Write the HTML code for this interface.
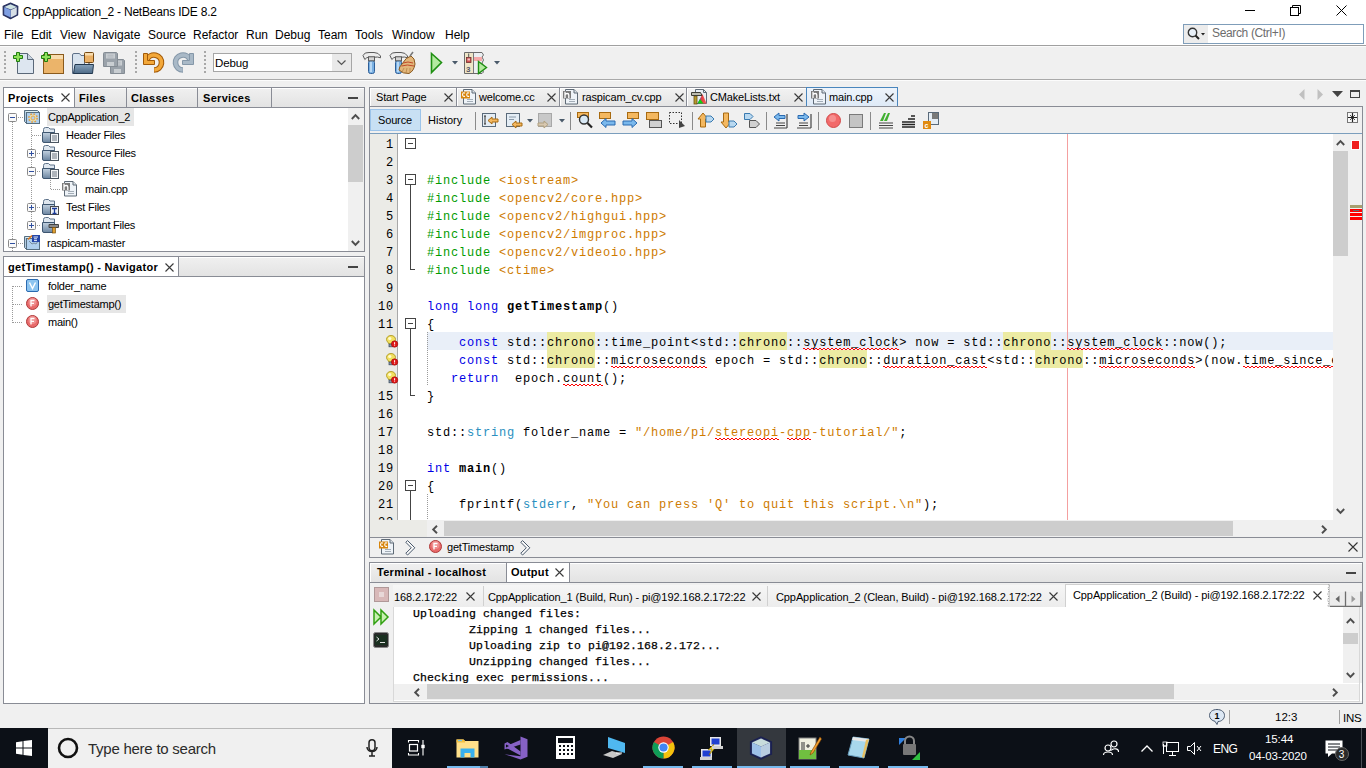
<!DOCTYPE html>
<html><head><meta charset="utf-8"><style>
*{box-sizing:border-box}
body{margin:0;width:1366px;height:768px;overflow:hidden;background:#f0f0f0;font-family:"Liberation Sans",sans-serif;font-size:11px;color:#000;position:relative}
.a{position:absolute}
.ui{font-size:11px;letter-spacing:-0.25px;white-space:nowrap;line-height:13px}
.b{font-weight:bold;letter-spacing:0.3px}
.code{font-family:"Liberation Mono",monospace;font-size:12px;letter-spacing:0.8px;white-space:pre;line-height:18px}
.out{font-family:"Liberation Mono",monospace;font-size:11.5px;letter-spacing:0.1px;white-space:pre;line-height:16px;color:#000;-webkit-text-stroke:0.25px #000}
.kw{color:#0000e6}.pp{color:#009b00}.st{color:#ce7b00}.ty{color:#2a8fc0}
.hl{background:#ecebA3;padding-top:4px}
.sq{}
.zz{position:absolute;height:2px;background-image:linear-gradient(90deg,#f00 50%,transparent 50%),linear-gradient(90deg,transparent 50%,#f00 50%);background-size:4px 1px,4px 1px;background-position:0 0,0 1px;background-repeat:repeat-x}
svg.a{overflow:visible}
</style></head><body>
<div class="a" style="left:0px;top:0px;width:1366px;height:45px;background:#fff"></div>
<div class="a" style="left:0px;top:45px;width:1366px;height:1px;background:#a0a0a0"></div>
<div class="a" style="left:0px;top:46px;width:1366px;height:1px;background:#fbfbfb"></div>
<svg class="a" style="left:0px;top:0px;" width="22" height="22" viewBox="0 0 22 22"><path d="M10.5 3 L17.8 6.3 L17.6 15 L10.5 18.6 L3.3 15 L3.2 6.3Z" fill="#2a3468" stroke="#27305e" stroke-width="1.2" stroke-linejoin="round"/><path d="M10.5 4.3 L16.8 7 L10.8 9.6 L4.2 7Z" fill="#cfe3e3"/><path d="M4.2 7.3 L10.7 10 L10.7 17.6 L4.2 14.4Z" fill="#7f9fe2"/><path d="M10.9 10 L16.8 7.3 L16.7 14.4 L10.9 17.6Z" fill="#d7dfe6"/></svg>
<div class="a ui" style="left:23px;top:5px;font-size:12px;letter-spacing:-0.2px;line-height:15px">CppApplication_2 - NetBeans IDE 8.2</div>
<div class="a ui" style="left:4px;top:28px;font-size:12px;letter-spacing:0;line-height:15px">File</div>
<div class="a ui" style="left:31px;top:28px;font-size:12px;letter-spacing:0;line-height:15px">Edit</div>
<div class="a ui" style="left:60px;top:28px;font-size:12px;letter-spacing:0;line-height:15px">View</div>
<div class="a ui" style="left:93px;top:28px;font-size:12px;letter-spacing:0;line-height:15px">Navigate</div>
<div class="a ui" style="left:148px;top:28px;font-size:12px;letter-spacing:0;line-height:15px">Source</div>
<div class="a ui" style="left:193px;top:28px;font-size:12px;letter-spacing:0;line-height:15px">Refactor</div>
<div class="a ui" style="left:246px;top:28px;font-size:12px;letter-spacing:0;line-height:15px">Run</div>
<div class="a ui" style="left:275px;top:28px;font-size:12px;letter-spacing:0;line-height:15px">Debug</div>
<div class="a ui" style="left:318px;top:28px;font-size:12px;letter-spacing:0;line-height:15px">Team</div>
<div class="a ui" style="left:355px;top:28px;font-size:12px;letter-spacing:0;line-height:15px">Tools</div>
<div class="a ui" style="left:392px;top:28px;font-size:12px;letter-spacing:0;line-height:15px">Window</div>
<div class="a ui" style="left:445px;top:28px;font-size:12px;letter-spacing:0;line-height:15px">Help</div>
<div class="a" style="left:1245px;top:10px;width:10px;height:1px;background:#000"></div>
<svg class="a" style="left:1290px;top:5px;" width="11" height="11" viewBox="0 0 11 11"><rect x="0.5" y="2.5" width="8" height="8" fill="none" stroke="#000"/><path d="M2.5 2.5 V0.5 H10.5 V8.5 H8.5" fill="none" stroke="#000"/></svg>
<svg class="a" style="left:1336px;top:5px;" width="11" height="11" viewBox="0 0 11 11"><path d="M0.5 0.5 L10.5 10.5 M10.5 0.5 L0.5 10.5" stroke="#000" stroke-width="1"/></svg>
<div class="a" style="left:1183px;top:24px;width:181px;height:20px;background:#fff;border:1px solid #7f9db9"></div>
<div class="a" style="left:1184px;top:25px;width:24px;height:18px;background:#ececec"></div>
<svg class="a" style="left:1187px;top:27px;" width="18" height="14" viewBox="0 0 18 14"><circle cx="5.5" cy="5.5" r="4.2" fill="#e8f0f8" stroke="#333" stroke-width="1.4"/><path d="M8.5 8.5 L12 12" stroke="#222" stroke-width="2"/><path d="M14 6 L18 6 L16 8.5Z" fill="#222"/></svg>
<div class="a ui" style="left:1212px;top:26px;font-size:12px;letter-spacing:-0.35px;color:#6d6d6d;line-height:15px">Search (Ctrl+I)</div>
<div class="a" style="left:0px;top:79px;width:1366px;height:1px;background:#a9a9a9"></div>
<div class="a" style="left:0px;top:80px;width:1366px;height:1px;background:#fcfcfc"></div>
<svg class="a" style="left:4px;top:51px;" width="2" height="22" viewBox="0 0 2 22"><rect x="0" y="0" width="2" height="2" fill="#a8a8a8"/><rect x="0" y="4" width="2" height="2" fill="#a8a8a8"/><rect x="0" y="8" width="2" height="2" fill="#a8a8a8"/><rect x="0" y="12" width="2" height="2" fill="#a8a8a8"/><rect x="0" y="16" width="2" height="2" fill="#a8a8a8"/><rect x="0" y="20" width="2" height="2" fill="#a8a8a8"/></svg>
<svg class="a" style="left:135px;top:51px;" width="2" height="22" viewBox="0 0 2 22"><rect x="0" y="0" width="2" height="2" fill="#a8a8a8"/><rect x="0" y="4" width="2" height="2" fill="#a8a8a8"/><rect x="0" y="8" width="2" height="2" fill="#a8a8a8"/><rect x="0" y="12" width="2" height="2" fill="#a8a8a8"/><rect x="0" y="16" width="2" height="2" fill="#a8a8a8"/><rect x="0" y="20" width="2" height="2" fill="#a8a8a8"/></svg>
<svg class="a" style="left:204px;top:51px;" width="2" height="22" viewBox="0 0 2 22"><rect x="0" y="0" width="2" height="2" fill="#a8a8a8"/><rect x="0" y="4" width="2" height="2" fill="#a8a8a8"/><rect x="0" y="8" width="2" height="2" fill="#a8a8a8"/><rect x="0" y="12" width="2" height="2" fill="#a8a8a8"/><rect x="0" y="16" width="2" height="2" fill="#a8a8a8"/><rect x="0" y="20" width="2" height="2" fill="#a8a8a8"/></svg>
<svg class="a" style="left:13px;top:52px;" width="22" height="22" viewBox="0 0 22 22"><path d="M4.5 1.5 H14.5 L20.5 7.5 V21.5 H4.5Z" fill="#dde6f0" stroke="#5a6878"/><path d="M14.5 1.5 V7.5 H20.5" fill="#c7d3e0" stroke="#5a6878"/><path d="M3.5 0.5 h3 v3 h3 v3 h-3 v3 h-3 v-3 h-3 v-3 h3z" fill="#8fe05a" stroke="#1f7d0f"/></svg>
<svg class="a" style="left:41px;top:52px;" width="23" height="22" viewBox="0 0 23 22"><rect x="2.5" y="2.5" width="20" height="19" fill="#ebb46a" stroke="#8a5a1c"/><rect x="3" y="3" width="19" height="4" fill="#f8dcae"/><path d="M3.5 0.5 h3 v3 h3 v3 h-3 v3 h-3 v-3 h-3 v-3 h3z" fill="#8fe05a" stroke="#1f7d0f"/></svg>
<svg class="a" style="left:72px;top:52px;" width="23" height="22" viewBox="0 0 23 22"><defs><linearGradient id="opf" x1="0" y1="0" x2="0" y2="1"><stop offset="0" stop-color="#86a2bc"/><stop offset="1" stop-color="#4d6a86"/></linearGradient></defs><path d="M0.5 3 Q0.5 1.5 2 1.5 H7.5 L9 3.5 H12.5 V21.5 H0.5Z" fill="#d8e3ee" stroke="#5e7088"/><rect x="12.5" y="0.5" width="9" height="10" rx="1" fill="#eab066" stroke="#774a12"/><rect x="13" y="1" width="8" height="2.5" fill="#f8dcae"/><path d="M17 10.5 V12" stroke="#333"/><path d="M3 12.5 H21.5 L20.5 21.5 H1.5 Z" fill="url(#opf)" stroke="#22384f" stroke-linejoin="round"/></svg>
<svg class="a" style="left:103px;top:52px;" width="23" height="22" viewBox="0 0 23 22"><path d="M7.5 8.5 Q7.5 7.5 8.5 7.5 H20.5 L21.5 8.5 V21.5 H7.5Z" fill="#9aa2aa" stroke="#848c94"/><rect x="10" y="8.5" width="9" height="5" fill="#c9ced2"/><path d="M11.5 10.2 H17.5 M11.5 12 H17.5" stroke="#aab0b6" stroke-width="0.8"/><rect x="11" y="17" width="7" height="4" fill="#c9ced2"/><path d="M0.5 1.5 Q0.5 0.5 1.5 0.5 H13.5 L14.5 1.5 V14.5 H0.5Z" fill="#9aa2aa" stroke="#848c94"/><rect x="3" y="1.5" width="9" height="5" fill="#c9ced2"/><path d="M4.5 3.2 H10.5 M4.5 5 H10.5" stroke="#aab0b6" stroke-width="0.8"/><rect x="4" y="10" width="7" height="4" fill="#c9ced2"/></svg>
<svg class="a" style="left:143px;top:53px;" width="22" height="21" viewBox="0 0 22 21"><path d="M3.95 6.93 A7.5 7.5 0 1 1 11 17" fill="none" stroke="#a25a08" stroke-width="5.6"/><path d="M3.95 6.93 A7.5 7.5 0 1 1 11.3 17" fill="none" stroke="#f3a83a" stroke-width="3.6"/><path d="M0.5 0.5 H4.5 V7.5 H11.5 V11.5 H0.5 Z" fill="#f3a83a" stroke="#a25a08" stroke-width="1"/><rect x="1" y="1" width="3" height="10" fill="#f3a83a"/><rect x="1" y="8" width="10" height="3" fill="#f3a83a"/></svg>
<svg class="a" style="left:173px;top:53px;" width="22" height="21" viewBox="0 0 22 21"><g transform="translate(21,0) scale(-1,1)"><path d="M3.95 6.93 A7.5 7.5 0 1 1 11 17" fill="none" stroke="#8497a8" stroke-width="5.6"/><path d="M3.95 6.93 A7.5 7.5 0 1 1 11.3 17" fill="none" stroke="#a9b9c7" stroke-width="3.6"/><path d="M0.5 0.5 H4.5 V7.5 H11.5 V11.5 H0.5 Z" fill="#a9b9c7" stroke="#8497a8" stroke-width="1"/><rect x="1" y="1" width="3" height="10" fill="#a9b9c7"/><rect x="1" y="8" width="10" height="3" fill="#a9b9c7"/></g></svg>
<div class="a" style="left:213px;top:53px;width:139px;height:19px;background:#e9e9e9;border:1px solid #a6a6a6"></div>
<div class="a" style="left:214px;top:54px;width:118px;height:17px;background:#fff"></div>
<div class="a ui" style="left:215px;top:57px;font-size:11.5px;letter-spacing:-0.1px;line-height:13px">Debug</div>
<svg class="a" style="left:337px;top:60px;" width="9" height="6" viewBox="0 0 9 6"><path d="M0.5 0.5 L4.5 4.5 L8.5 0.5" fill="none" stroke="#555" stroke-width="1.2"/></svg>
<svg class="a" style="left:362px;top:51px;" width="20" height="23" viewBox="0 0 20 23"><path d="M1 4.5 Q2.5 1 7 1.5 H12 Q16.5 1.5 18.5 5 V6.8 Q15.5 5.6 12.5 6.2 H7 Q4.5 6.2 2.8 8.5 Z" fill="#ececec" stroke="#5a5a5a"/><rect x="6.5" y="9.5" width="6" height="13" rx="2" fill="#7ab0e2" stroke="#2e5f98"/><rect x="8" y="11" width="2" height="10" fill="#b8d8f4"/><rect x="6.5" y="5.8" width="6" height="4" fill="#d4d4d4" stroke="#5a5a5a"/></svg>
<svg class="a" style="left:389px;top:51px;" width="27" height="23" viewBox="0 0 27 23"><path d="M1 4.5 Q2.5 1 7 1.5 H12 Q16.5 1.5 18.5 5 V6.8 Q15.5 5.6 12.5 6.2 H7 Q4.5 6.2 2.8 8.5 Z" fill="#ececec" stroke="#5a5a5a"/><rect x="6.5" y="9.5" width="6" height="13" rx="2" fill="#7ab0e2" stroke="#2e5f98"/><rect x="8" y="11" width="2" height="10" fill="#b8d8f4"/><rect x="6.5" y="5.8" width="6" height="4" fill="#d4d4d4" stroke="#5a5a5a"/><path d="M13 13 Q17 6 22 5 Q26 7 26 13 Q25 20 20 22.5 Q14 23 10 19 Q10 16 13 13Z" fill="#e2b67a" stroke="#8a5a20"/><path d="M14 12 Q19 10 24 12 M12.5 15 Q18 13 25 15" fill="none" stroke="#c04a2a" stroke-width="1"/><path d="M15 17 L13 21 M18 17 L17 22 M21 17 L21 22" stroke="#b08040" stroke-width="0.7"/><path d="M21 5 L24 1" stroke="#777" stroke-width="1.5"/></svg>
<svg class="a" style="left:430px;top:52px;" width="13" height="22" viewBox="0 0 13 22"><path d="M1.5 1.5 L11.5 10.5 L1.5 20.5 Z" fill="#b4eaa0" stroke="#1f8f12" stroke-width="1.6"/></svg>
<svg class="a" style="left:452px;top:61px;" width="6" height="4" viewBox="0 0 6 4"><path d="M0 0 H6 L3 3.5Z" fill="#4a5a6a"/></svg>
<svg class="a" style="left:464px;top:52px;" width="24" height="23" viewBox="0 0 24 23"><path d="M0.5 0.5 H18 L19.5 3 L18 5 L19.5 8 L18 11 L19.5 14 L18 17 L19.5 20 L18 21.5 H0.5Z" fill="#eceff2" stroke="#6b6b6b"/><rect x="1" y="1" width="8" height="20" fill="#efe6c8"/><path d="M9.5 1 V21" stroke="#7a7a7a"/><rect x="2.5" y="5.5" width="4.5" height="5" fill="#d05050" stroke="#703030" stroke-width="0.8"/><rect x="3.5" y="6.5" width="2.5" height="2" fill="#f4c0c0"/><path d="M4.7 1.5 V5" stroke="#555"/><text x="2" y="19.5" font-size="8" font-weight="bold" font-family="Liberation Sans" fill="#556">3</text><rect x="10" y="5" width="8" height="4" fill="#f6a8a8"/><path d="M14.5 9.5 L22.5 15.5 L14.5 21.5Z" fill="#b4eaa0" stroke="#1f8f12" stroke-width="1.4"/></svg>
<svg class="a" style="left:494px;top:61px;" width="6" height="4" viewBox="0 0 6 4"><path d="M0 0 H6 L3 3.5Z" fill="#4a5a6a"/></svg>
<div class="a" style="left:3px;top:87px;width:362px;height:165px;background:#fff;border:1px solid #898c95"></div>
<div class="a" style="left:4px;top:88px;width:360px;height:19px;background:linear-gradient(#f0f0f0,#e3e3e3);box-shadow:inset 1px 1px 0 #fff"></div>
<div class="a" style="left:4px;top:88px;width:70px;height:19px;background:#fff"></div>
<div class="a" style="left:4px;top:107px;width:360px;height:1px;background:#898c95"></div>
<div class="a" style="left:74px;top:88px;width:1px;height:19px;background:#898c95"></div>
<div class="a" style="left:126px;top:88px;width:1px;height:19px;background:#898c95"></div>
<div class="a" style="left:197px;top:88px;width:1px;height:19px;background:#898c95"></div>
<div class="a" style="left:271px;top:88px;width:1px;height:19px;background:#898c95"></div>
<div class="a ui b" style="left:8px;top:92px;">Projects</div>
<svg class="a" style="left:61px;top:93px;" width="9" height="9" viewBox="0 0 9 9"><path d="M0.5 0.5 L8.5 8.5 M8.5 0.5 L0.5 8.5" stroke="#3a3a3a" stroke-width="1.1"/></svg>
<div class="a ui b" style="left:79px;top:92px;">Files</div>
<div class="a ui b" style="left:131px;top:92px;">Classes</div>
<div class="a ui b" style="left:203px;top:92px;">Services</div>
<div class="a" style="left:348px;top:97px;width:10px;height:2px;background:#444"></div>
<div class="a" style="left:348px;top:108px;width:16px;height:143px;background:#f0f0f0"></div>
<div class="a" style="left:348px;top:125px;width:15px;height:57px;background:#cdcdcd"></div>
<svg class="a" style="left:351px;top:114px;" width="9" height="6" viewBox="0 0 9 6"><path d="M0.8 5 L4.5 1.2 L8.2 5" fill="none" stroke="#4e4e4e" stroke-width="1.9"/></svg>
<svg class="a" style="left:351px;top:240px;" width="9" height="6" viewBox="0 0 9 6"><path d="M0.8 1 L4.5 4.8 L8.2 1" fill="none" stroke="#4e4e4e" stroke-width="1.9"/></svg>
<div class="a" style="left:47px;top:108px;width:87px;height:18px;background:#e6e6e6"></div>
<div class="a" style="left:12px;top:122px;width:1px;height:129px;background:repeating-linear-gradient(#9a9a9a 0 1px,transparent 1px 2px)"></div>
<div class="a" style="left:31px;top:126px;width:1px;height:100px;background:repeating-linear-gradient(#9a9a9a 0 1px,transparent 1px 2px)"></div>
<div class="a" style="left:50px;top:176px;width:1px;height:13px;background:repeating-linear-gradient(#9a9a9a 0 1px,transparent 1px 2px)"></div>
<div class="a ui" style="left:48px;top:111px;">CppApplication_2</div>
<div class="a ui" style="left:66px;top:129px;">Header Files</div>
<div class="a ui" style="left:66px;top:147px;">Resource Files</div>
<div class="a ui" style="left:66px;top:165px;">Source Files</div>
<div class="a ui" style="left:85px;top:183px;">main.cpp</div>
<div class="a ui" style="left:66px;top:201px;">Test Files</div>
<div class="a ui" style="left:66px;top:219px;">Important Files</div>
<div class="a ui" style="left:47px;top:237px;">raspicam-master</div>
<svg class="a" style="left:8px;top:113px;" width="9" height="9" viewBox="0 0 9 9"><rect x="0.5" y="0.5" width="8" height="8" rx="1" fill="#fafafa" stroke="#8a8a8a"/><path d="M2 4.5 H7" stroke="#3050a0" stroke-width="1"/></svg>
<div class="a" style="left:18px;top:117px;width:5px;height:1px;background:repeating-linear-gradient(90deg,#9a9a9a 0 1px,transparent 1px 2px)"></div>
<svg class="a" style="left:8px;top:239px;" width="9" height="9" viewBox="0 0 9 9"><rect x="0.5" y="0.5" width="8" height="8" rx="1" fill="#fafafa" stroke="#8a8a8a"/><path d="M2 4.5 H7" stroke="#3050a0" stroke-width="1"/></svg>
<div class="a" style="left:18px;top:243px;width:5px;height:1px;background:repeating-linear-gradient(90deg,#9a9a9a 0 1px,transparent 1px 2px)"></div>
<svg class="a" style="left:27px;top:149px;" width="9" height="9" viewBox="0 0 9 9"><rect x="0.5" y="0.5" width="8" height="8" rx="1" fill="#fafafa" stroke="#8a8a8a"/><path d="M2 4.5 H7" stroke="#3050a0" stroke-width="1"/><path d="M4.5 2 V7" stroke="#3050a0" stroke-width="1"/></svg>
<div class="a" style="left:37px;top:153px;width:4px;height:1px;background:repeating-linear-gradient(90deg,#9a9a9a 0 1px,transparent 1px 2px)"></div>
<svg class="a" style="left:27px;top:167px;" width="9" height="9" viewBox="0 0 9 9"><rect x="0.5" y="0.5" width="8" height="8" rx="1" fill="#fafafa" stroke="#8a8a8a"/><path d="M2 4.5 H7" stroke="#3050a0" stroke-width="1"/></svg>
<div class="a" style="left:37px;top:171px;width:4px;height:1px;background:repeating-linear-gradient(90deg,#9a9a9a 0 1px,transparent 1px 2px)"></div>
<svg class="a" style="left:27px;top:203px;" width="9" height="9" viewBox="0 0 9 9"><rect x="0.5" y="0.5" width="8" height="8" rx="1" fill="#fafafa" stroke="#8a8a8a"/><path d="M2 4.5 H7" stroke="#3050a0" stroke-width="1"/><path d="M4.5 2 V7" stroke="#3050a0" stroke-width="1"/></svg>
<div class="a" style="left:37px;top:207px;width:4px;height:1px;background:repeating-linear-gradient(90deg,#9a9a9a 0 1px,transparent 1px 2px)"></div>
<svg class="a" style="left:27px;top:221px;" width="9" height="9" viewBox="0 0 9 9"><rect x="0.5" y="0.5" width="8" height="8" rx="1" fill="#fafafa" stroke="#8a8a8a"/><path d="M2 4.5 H7" stroke="#3050a0" stroke-width="1"/><path d="M4.5 2 V7" stroke="#3050a0" stroke-width="1"/></svg>
<div class="a" style="left:37px;top:225px;width:4px;height:1px;background:repeating-linear-gradient(90deg,#9a9a9a 0 1px,transparent 1px 2px)"></div>
<div class="a" style="left:32px;top:135px;width:9px;height:1px;background:repeating-linear-gradient(90deg,#9a9a9a 0 1px,transparent 1px 2px)"></div>
<div class="a" style="left:51px;top:189px;width:10px;height:1px;background:repeating-linear-gradient(90deg,#9a9a9a 0 1px,transparent 1px 2px)"></div>
<svg class="a" style="left:24px;top:110px;" width="17" height="15" viewBox="0 0 17 15"><path d="M0.5 0.5 H13.5 L15.5 2.5 V13.5 H2.5 L0.5 11.5 Z" fill="#b4cce2" stroke="#566e80"/><path d="M1.2 1 H13.2 L14.8 2.4 H2.6Z" fill="#dff0f2"/><rect x="2.5" y="2.5" width="13" height="11" fill="#b0d0ee" stroke="#566e80"/><circle cx="9" cy="8" r="3.7" fill="none" stroke="#e2a040" stroke-width="2.4" stroke-dasharray="1.45 1.45"/><circle cx="9" cy="8" r="2.6" fill="none" stroke="#f2e2a8" stroke-width="1.4"/><circle cx="9" cy="8" r="2" fill="none" stroke="#e2a040" stroke-width="0.8"/></svg>
<svg class="a" style="left:42px;top:127px;" width="17" height="16" viewBox="0 0 17 16"><defs><linearGradient id="fg" x1="0" y1="0" x2="0" y2="1"><stop offset="0" stop-color="#c3d2e0"/><stop offset="1" stop-color="#6a84a0"/></linearGradient></defs><path d="M1.5 2.5 Q1.5 0.5 3.5 0.5 H6.5 L8 2 H12.5 V7 H1.5Z" fill="#dfe7ef" stroke="#5e738a"/><path d="M0.5 5.5 H12.5 V15.5 H2 Q0.5 15.5 0.5 14Z" fill="url(#fg)" stroke="#3e5670"/><rect x="8.5" y="6.5" width="8" height="9" fill="#f4f6f8" stroke="#4a5560"/><path d="M10 9 h5 M10 11 h5 M10 13 h5" stroke="#6a7480" stroke-width="1"/></svg>
<svg class="a" style="left:42px;top:145px;" width="17" height="16" viewBox="0 0 17 16"><defs><linearGradient id="fg" x1="0" y1="0" x2="0" y2="1"><stop offset="0" stop-color="#c3d2e0"/><stop offset="1" stop-color="#6a84a0"/></linearGradient></defs><path d="M1.5 2.5 Q1.5 0.5 3.5 0.5 H6.5 L8 2 H12.5 V7 H1.5Z" fill="#dfe7ef" stroke="#5e738a"/><path d="M0.5 5.5 H12.5 V15.5 H2 Q0.5 15.5 0.5 14Z" fill="url(#fg)" stroke="#3e5670"/><rect x="8.5" y="6.5" width="8" height="9" fill="#f4f6f8" stroke="#4a5560"/><path d="M10 9 h5 M10 11 h5 M10 13 h5" stroke="#6a7480" stroke-width="1"/></svg>
<svg class="a" style="left:42px;top:163px;" width="17" height="16" viewBox="0 0 17 16"><defs><linearGradient id="fg" x1="0" y1="0" x2="0" y2="1"><stop offset="0" stop-color="#c3d2e0"/><stop offset="1" stop-color="#6a84a0"/></linearGradient></defs><path d="M1.5 2.5 Q1.5 0.5 3.5 0.5 H6.5 L8 2 H12.5 V7 H1.5Z" fill="#dfe7ef" stroke="#5e738a"/><path d="M0.5 5.5 H12.5 V15.5 H2 Q0.5 15.5 0.5 14Z" fill="url(#fg)" stroke="#3e5670"/><rect x="8.5" y="6.5" width="8" height="9" fill="#f4f6f8" stroke="#4a5560"/><path d="M10 9 h5 M10 11 h5 M10 13 h5" stroke="#6a7480" stroke-width="1"/></svg>
<svg class="a" style="left:42px;top:199px;" width="17" height="16" viewBox="0 0 17 16"><defs><linearGradient id="fg" x1="0" y1="0" x2="0" y2="1"><stop offset="0" stop-color="#c3d2e0"/><stop offset="1" stop-color="#6a84a0"/></linearGradient></defs><path d="M1.5 2.5 Q1.5 0.5 3.5 0.5 H6.5 L8 2 H12.5 V7 H1.5Z" fill="#dfe7ef" stroke="#5e738a"/><path d="M0.5 5.5 H12.5 V15.5 H2 Q0.5 15.5 0.5 14Z" fill="url(#fg)" stroke="#3e5670"/><rect x="8.5" y="7.5" width="8" height="8" fill="#eef2f6" stroke="#4a4a4a"/><path d="M10 9.5 h5 M12.5 9.5 v5 M10.5 14.5 h4" stroke="#1a3a9a" stroke-width="1.3"/></svg>
<svg class="a" style="left:42px;top:217px;" width="17" height="16" viewBox="0 0 17 16"><defs><linearGradient id="fg" x1="0" y1="0" x2="0" y2="1"><stop offset="0" stop-color="#c3d2e0"/><stop offset="1" stop-color="#6a84a0"/></linearGradient></defs><path d="M1.5 2.5 Q1.5 0.5 3.5 0.5 H6.5 L8 2 H12.5 V7 H1.5Z" fill="#dfe7ef" stroke="#5e738a"/><path d="M0.5 5.5 H12.5 V15.5 H2 Q0.5 15.5 0.5 14Z" fill="url(#fg)" stroke="#3e5670"/><path d="M7 7.5 H16.5 V10.5 H7Z" fill="#8a8a8a" stroke="#444"/><rect x="10.5" y="10.5" width="3" height="5.5" fill="#e0a030" stroke="#7a5010" stroke-width="0.7"/></svg>
<svg class="a" style="left:62px;top:181px;" width="16" height="16" viewBox="0 0 16 16"><path d="M2.5 0.5 h8.5 l3.5 3.5 v11 h-12z" fill="#eef3f8" stroke="#5e6a76"/><path d="M11 0.5 v3.5 h3.5" fill="#dde4ea" stroke="#5e6a76"/><path d="M6 10.5 h6 M6 12.5 h6" stroke="#8f9aa6" stroke-width="0.8"/><rect x="0" y="2" width="8" height="7.5" fill="#7a7a7a"/><path d="M2 2.8 V9 M2 5.8 Q2.5 4.5 4.2 4.5 Q5.8 4.5 5.8 6 V9" fill="none" stroke="#fff" stroke-width="1.3"/></svg>
<svg class="a" style="left:24px;top:235px;" width="17" height="16" viewBox="0 0 17 16"><g transform="translate(0,1)"><path d="M0.5 0.5 H13.5 L15.5 2.5 V13.5 H2.5 L0.5 11.5 Z" fill="#b4cce2" stroke="#566e80"/><path d="M1.2 1 H13.2 L14.8 2.4 H2.6Z" fill="#dff0f2"/><rect x="2.5" y="2.5" width="13" height="11" fill="#b0d0ee" stroke="#566e80"/></g><path d="M5 6 L8 9 L10 8 L12 9 L14 6" fill="none" stroke="#6a7a88" stroke-width="0.8"/><rect x="8" y="0" width="8" height="7" fill="#2446a8"/><path d="M9.5 2 H14 M10 3.8 H13 M10 5.6 H13" stroke="#fff" stroke-width="0.9"/><path d="M4 4.5 L8 0.5" stroke="#e07a20" stroke-width="1.6"/></svg>
<div class="a" style="left:3px;top:256px;width:362px;height:448px;background:#fff;border:1px solid #898c95"></div>
<div class="a" style="left:4px;top:257px;width:360px;height:19px;background:linear-gradient(#f0f0f0,#e3e3e3);box-shadow:inset 1px 1px 0 #fff"></div>
<div class="a" style="left:4px;top:257px;width:174px;height:19px;background:#fff"></div>
<div class="a" style="left:4px;top:276px;width:360px;height:1px;background:#898c95"></div>
<div class="a" style="left:178px;top:257px;width:1px;height:19px;background:#898c95"></div>
<div class="a ui b" style="left:8px;top:261px;">getTimestamp() - Navigator</div>
<svg class="a" style="left:165px;top:263px;" width="9" height="9" viewBox="0 0 9 9"><path d="M0.5 0.5 L8.5 8.5 M8.5 0.5 L0.5 8.5" stroke="#3a3a3a" stroke-width="1.1"/></svg>
<div class="a" style="left:348px;top:266px;width:10px;height:2px;background:#444"></div>
<div class="a" style="left:47px;top:295px;width:79px;height:18px;background:#e6e6e6"></div>
<div class="a" style="left:12px;top:286px;width:1px;height:37px;background:repeating-linear-gradient(#9a9a9a 0 1px,transparent 1px 2px)"></div>
<div class="a" style="left:13px;top:286px;width:10px;height:1px;background:repeating-linear-gradient(90deg,#9a9a9a 0 1px,transparent 1px 2px)"></div>
<div class="a" style="left:13px;top:304px;width:10px;height:1px;background:repeating-linear-gradient(90deg,#9a9a9a 0 1px,transparent 1px 2px)"></div>
<div class="a" style="left:13px;top:322px;width:10px;height:1px;background:repeating-linear-gradient(90deg,#9a9a9a 0 1px,transparent 1px 2px)"></div>
<svg class="a" style="left:26px;top:279px;" width="13" height="13" viewBox="0 0 13 13"><rect x="0.5" y="0.5" width="12" height="12" rx="1.5" fill="#8cc4f0" stroke="#2a6ab0"/><path d="M3.5 3.5 L6.5 9.5 L9.5 3.5" fill="none" stroke="#fff" stroke-width="1.4"/></svg>
<svg class="a" style="left:26px;top:297px;" width="13" height="13" viewBox="0 0 13 13"><circle cx="6.5" cy="6.5" r="6" fill="#e86a6a" stroke="#b03a3a"/><circle cx="6.5" cy="5" r="4" fill="#f4a8a8" opacity="0.6"/><path d="M5 9.5 V3.5 H8.5 M5 6.3 H8" fill="none" stroke="#fff" stroke-width="1.3"/></svg>
<svg class="a" style="left:26px;top:315px;" width="13" height="13" viewBox="0 0 13 13"><circle cx="6.5" cy="6.5" r="6" fill="#e86a6a" stroke="#b03a3a"/><circle cx="6.5" cy="5" r="4" fill="#f4a8a8" opacity="0.6"/><path d="M5 9.5 V3.5 H8.5 M5 6.3 H8" fill="none" stroke="#fff" stroke-width="1.3"/></svg>
<div class="a ui" style="left:48px;top:280px;">folder_name</div>
<div class="a ui" style="left:48px;top:298px;">getTimestamp()</div>
<div class="a ui" style="left:48px;top:316px;">main()</div>
<div class="a" style="left:369px;top:87px;width:88px;height:20px;background:linear-gradient(#f2f2f2,#e4e4e4);border:1px solid #898c95;border-bottom:none;box-shadow:inset 1px 1px 0 #fff"></div>
<div class="a" style="left:456px;top:87px;width:104px;height:20px;background:linear-gradient(#f2f2f2,#e4e4e4);border:1px solid #898c95;border-bottom:none;box-shadow:inset 1px 1px 0 #fff"></div>
<div class="a" style="left:559px;top:87px;width:128px;height:20px;background:linear-gradient(#f2f2f2,#e4e4e4);border:1px solid #898c95;border-bottom:none;box-shadow:inset 1px 1px 0 #fff"></div>
<div class="a" style="left:686px;top:87px;width:121px;height:20px;background:linear-gradient(#f2f2f2,#e4e4e4);border:1px solid #898c95;border-bottom:none;box-shadow:inset 1px 1px 0 #fff"></div>
<div class="a" style="left:806px;top:87px;width:92px;height:20px;background:linear-gradient(#eef4fb,#dde9f6);border:1px solid #4a86bd;border-bottom:none"></div>
<div class="a ui" style="left:376px;top:91px;letter-spacing:-0.15px">Start Page</div>
<svg class="a" style="left:444px;top:93px;" width="9" height="9" viewBox="0 0 9 9"><path d="M0.5 0.5 L8.5 8.5 M8.5 0.5 L0.5 8.5" stroke="#3a3a3a" stroke-width="1.1"/></svg>
<svg class="a" style="left:461px;top:89px;" width="16" height="16" viewBox="0 0 16 16"><path d="M2.5 0.5 h8.5 l3.5 3.5 v11 h-12z" fill="#eef3f8" stroke="#5e6a76"/><path d="M11 0.5 v3.5 h3.5" fill="#dde4ea" stroke="#5e6a76"/><path d="M6 10.5 h6 M6 12.5 h6" stroke="#8f9aa6" stroke-width="0.8"/><rect x="0" y="2.5" width="9" height="7" fill="#d8850c"/><path d="M4 4.2 Q3 3.4 2.1 4 Q1.4 4.8 1.6 6.2 Q2 7.8 4 7.2 M8.2 4.2 Q7.2 3.4 6.3 4 Q5.6 4.8 5.8 6.2 Q6.2 7.8 8.2 7.2" fill="none" stroke="#fff" stroke-width="1.1"/></svg>
<div class="a ui" style="left:479px;top:91px;letter-spacing:-0.2px">welcome.cc</div>
<svg class="a" style="left:547px;top:93px;" width="9" height="9" viewBox="0 0 9 9"><path d="M0.5 0.5 L8.5 8.5 M8.5 0.5 L0.5 8.5" stroke="#3a3a3a" stroke-width="1.1"/></svg>
<svg class="a" style="left:563px;top:89px;" width="16" height="16" viewBox="0 0 16 16"><path d="M2.5 0.5 h8.5 l3.5 3.5 v11 h-12z" fill="#eef3f8" stroke="#5e6a76"/><path d="M11 0.5 v3.5 h3.5" fill="#dde4ea" stroke="#5e6a76"/><path d="M6 10.5 h6 M6 12.5 h6" stroke="#8f9aa6" stroke-width="0.8"/><rect x="0" y="2" width="8" height="7.5" fill="#7a7a7a"/><path d="M2 2.8 V9 M2 5.8 Q2.5 4.5 4.2 4.5 Q5.8 4.5 5.8 6 V9" fill="none" stroke="#fff" stroke-width="1.3"/></svg>
<div class="a ui" style="left:582px;top:91px;letter-spacing:-0.15px">raspicam_cv.cpp</div>
<svg class="a" style="left:675px;top:93px;" width="9" height="9" viewBox="0 0 9 9"><path d="M0.5 0.5 L8.5 8.5 M8.5 0.5 L0.5 8.5" stroke="#3a3a3a" stroke-width="1.1"/></svg>
<svg class="a" style="left:691px;top:89px;" width="17" height="16" viewBox="0 0 17 16"><path d="M4.5 0.5 H12.5 L15.5 3.5 V14.5 H4.5Z" fill="#e8eef4" stroke="#5e6a76"/><path d="M12.5 0.5 V3.5 H15.5" fill="none" stroke="#5e6a76"/><defs><linearGradient id="cmk" x1="0" y1="0" x2="1" y2="0"><stop offset="0" stop-color="#2b3bd8"/><stop offset="0.5" stop-color="#e84040"/><stop offset="1" stop-color="#f06060"/></linearGradient></defs><path d="M6.5 14.5 L11.5 5 L15.5 14.5Z" fill="url(#cmk)"/><path d="M6.5 14.5 L9 10 L12.5 14.5Z" fill="#10d010"/><rect x="3" y="7" width="3" height="8" fill="#b89a30" stroke="#6a5410" stroke-width="0.8"/><path d="M0.5 3.5 H9.5 L11 6.5 H0.5Z" fill="#bdbdb0" stroke="#3e3e36"/></svg>
<div class="a ui" style="left:710px;top:91px;letter-spacing:-0.15px">CMakeLists.txt</div>
<svg class="a" style="left:794px;top:93px;" width="9" height="9" viewBox="0 0 9 9"><path d="M0.5 0.5 L8.5 8.5 M8.5 0.5 L0.5 8.5" stroke="#3a3a3a" stroke-width="1.1"/></svg>
<svg class="a" style="left:811px;top:89px;" width="16" height="16" viewBox="0 0 16 16"><path d="M2.5 0.5 h8.5 l3.5 3.5 v11 h-12z" fill="#eef3f8" stroke="#5e6a76"/><path d="M11 0.5 v3.5 h3.5" fill="#dde4ea" stroke="#5e6a76"/><path d="M6 10.5 h6 M6 12.5 h6" stroke="#8f9aa6" stroke-width="0.8"/><rect x="0" y="2" width="8" height="7.5" fill="#7a7a7a"/><path d="M2 2.8 V9 M2 5.8 Q2.5 4.5 4.2 4.5 Q5.8 4.5 5.8 6 V9" fill="none" stroke="#fff" stroke-width="1.3"/></svg>
<div class="a ui" style="left:829px;top:91px;letter-spacing:-0.15px">main.cpp</div>
<svg class="a" style="left:885px;top:93px;" width="9" height="9" viewBox="0 0 9 9"><path d="M0.5 0.5 L8.5 8.5 M8.5 0.5 L0.5 8.5" stroke="#3a3a3a" stroke-width="1.1"/></svg>
<svg class="a" style="left:1299px;top:89px;" width="6" height="11" viewBox="0 0 6 11"><path d="M5.5 0 V11 L0 5.5Z" fill="#c0c0c0"/></svg>
<svg class="a" style="left:1317px;top:89px;" width="6" height="11" viewBox="0 0 6 11"><path d="M0.5 0 V11 L6 5.5Z" fill="#c0c0c0"/></svg>
<svg class="a" style="left:1332px;top:91px;" width="11" height="6" viewBox="0 0 11 6"><path d="M0 0 H11 L5.5 6Z" fill="#444"/></svg>
<svg class="a" style="left:1350px;top:90px;" width="10" height="8" viewBox="0 0 10 8"><rect x="0.5" y="0.5" width="9" height="7" fill="none" stroke="#444"/><rect x="0" y="0" width="10" height="2" fill="#444"/></svg>
<div class="a" style="left:369px;top:106px;width:994px;height:432px;background:#f0f0f0;border:1px solid #898c95"></div>
<div class="a" style="left:370px;top:133px;width:992px;height:1px;background:#7b9ebd"></div>
<div class="a" style="left:370px;top:109px;width:51px;height:22px;background:#c8e0f4;border:1px solid #9cc4ea"></div>
<div class="a ui" style="left:378px;top:114px;letter-spacing:-0.15px">Source</div>
<div class="a ui" style="left:428px;top:114px;letter-spacing:0px">History</div>
<div class="a" style="left:475px;top:112px;width:1px;height:18px;background:#8a8a8a"></div>
<div class="a" style="left:570px;top:112px;width:1px;height:18px;background:#8a8a8a"></div>
<div class="a" style="left:692px;top:112px;width:1px;height:18px;background:#8a8a8a"></div>
<div class="a" style="left:766px;top:112px;width:1px;height:18px;background:#8a8a8a"></div>
<div class="a" style="left:818px;top:112px;width:1px;height:18px;background:#8a8a8a"></div>
<div class="a" style="left:870px;top:112px;width:1px;height:18px;background:#8a8a8a"></div>
<svg class="a" style="left:482px;top:113px;" width="17" height="15" viewBox="0 0 17 15"><rect x="0.5" y="0.5" width="13" height="13" fill="#e4edf5" stroke="#5a6a7a"/><path d="M3 3 V11 M2 3 H4 M2 11 H4" stroke="#333"/><path d="M16 6 H10 V4 L6 7.5 L10 11 V9 H16Z" fill="#f4b860" stroke="#a86a10"/></svg>
<svg class="a" style="left:506px;top:113px;" width="16" height="16" viewBox="0 0 16 16"><rect x="0.5" y="0.5" width="13" height="13" fill="#e4edf5" stroke="#5a6a7a"/><path d="M3 4 H10 M3 6.5 H8" stroke="#8a9aaa"/><path d="M16 10 H10 V8 L6 11.5 L10 15 V13 H16Z" fill="#f4b860" stroke="#a86a10"/></svg>
<svg class="a" style="left:527px;top:119px;" width="6" height="4" viewBox="0 0 6 4"><path d="M0 0 H6 L3 3.5Z" fill="#4a5a6a"/></svg>
<svg class="a" style="left:538px;top:113px;" width="16" height="16" viewBox="0 0 16 16"><rect x="0.5" y="0.5" width="13" height="13" fill="#c8c8c8" stroke="#a8a8a8"/><path d="M0 10 H6 V8 L10 11.5 L6 15 V13 H0Z" fill="#d8c8b0" stroke="#b0a080"/></svg>
<svg class="a" style="left:559px;top:119px;" width="6" height="4" viewBox="0 0 6 4"><path d="M0 0 H6 L3 3.5Z" fill="#4a5a6a"/></svg>
<svg class="a" style="left:577px;top:112px;" width="17" height="17" viewBox="0 0 17 17"><rect x="0.5" y="0.5" width="11" height="5" fill="#f4b860" stroke="#a86a10"/><circle cx="7" cy="7.5" r="4.5" fill="#d8e8f4" stroke="#333" stroke-width="1.4"/><path d="M10.5 11 L15 15.5" stroke="#222" stroke-width="2.2"/></svg>
<svg class="a" style="left:599px;top:112px;" width="17" height="16" viewBox="0 0 17 16"><rect x="0.5" y="0.5" width="11" height="6" fill="#f4b860" stroke="#a86a10"/><path d="M16 9 H7 V6.5 L2 11 L7 15.5 V13 H16Z" fill="#7ab8ec" stroke="#2a6ab0"/></svg>
<svg class="a" style="left:623px;top:112px;" width="17" height="16" viewBox="0 0 17 16"><rect x="4.5" y="0.5" width="11" height="6" fill="#f4b860" stroke="#a86a10"/><path d="M0 9 H9 V6.5 L14 11 L9 15.5 V13 H0Z" fill="#7ab8ec" stroke="#2a6ab0"/></svg>
<svg class="a" style="left:646px;top:112px;" width="17" height="16" viewBox="0 0 17 16"><rect x="0.5" y="0.5" width="12" height="7" fill="#f4b860" stroke="#a86a10"/><rect x="3.5" y="8.5" width="12" height="7" fill="#d0d0d0" stroke="#555"/></svg>
<svg class="a" style="left:669px;top:112px;" width="17" height="16" viewBox="0 0 17 16"><rect x="0.5" y="0.5" width="12" height="11" fill="none" stroke="#333" stroke-dasharray="1.5 1.5"/><path d="M10 8 L16 14 L10 16Z" fill="#444"/></svg>
<svg class="a" style="left:697px;top:112px;" width="17" height="17" viewBox="0 0 17 17"><path d="M6 1 L11 7 H8.5 V15 H3.5 V7 H1Z" fill="#f4b860" stroke="#a86a10"/><path d="M9 4 H14 L17 7 L14 10 H9Z" fill="#b8d8f0" stroke="#3a7ab0"/></svg>
<svg class="a" style="left:720px;top:112px;" width="17" height="17" viewBox="0 0 17 17"><path d="M6 16 L11 10 H8.5 V1 H3.5 V10 H1Z" fill="#f4b860" stroke="#a86a10"/><path d="M9 9 H14 L17 12 L14 15 H9Z" fill="#b8d8f0" stroke="#3a7ab0"/></svg>
<svg class="a" style="left:744px;top:112px;" width="17" height="17" viewBox="0 0 17 17"><path d="M0.5 1.5 H6 L9 4.5 L6 7.5 H0.5Z" fill="#b8d8f0" stroke="#3a7ab0"/><path d="M5.5 8.5 H12 L15.5 12 L12 15.5 H5.5Z" fill="#d0d0d0" stroke="#555"/></svg>
<svg class="a" style="left:773px;top:112px;" width="17" height="17" viewBox="0 0 17 17"><path d="M1 5 L6 1 V3.5 H12 V6.5 H6 V9Z" fill="#7ab8ec" stroke="#2a6ab0"/><path d="M14 2 V16 M3 11 H12 M3 13.5 H12 M1 16 H14" stroke="#444" stroke-width="1.2"/></svg>
<svg class="a" style="left:796px;top:112px;" width="17" height="17" viewBox="0 0 17 17"><path d="M13 5 L8 1 V3.5 H2 V6.5 H8 V9Z" fill="#7ab8ec" stroke="#2a6ab0"/><path d="M15 2 V16 M3 11 H12 M3 13.5 H12 M1 16 H15" stroke="#444" stroke-width="1.2"/></svg>
<svg class="a" style="left:826px;top:113px;" width="16" height="16" viewBox="0 0 16 16"><circle cx="7.5" cy="7.5" r="7" fill="#f26a6a" stroke="#d24a4a"/><circle cx="6.5" cy="5.5" r="3.5" fill="#f8a8a8" opacity="0.6"/></svg>
<svg class="a" style="left:849px;top:114px;" width="14" height="14" viewBox="0 0 14 14"><rect x="0.5" y="0.5" width="13" height="13" fill="#c4c4c4" stroke="#7a7a7a"/></svg>
<svg class="a" style="left:878px;top:112px;" width="16" height="17" viewBox="0 0 16 17"><path d="M2 9 L6 1 H8 L5 9Z M6 9 L10 1 H12 L9 9Z" fill="#40b030"/><path d="M1 11 H15 M1 13.5 H15 M1 16 H15" stroke="#444" stroke-width="1.2"/></svg>
<svg class="a" style="left:901px;top:113px;" width="15" height="15" viewBox="0 0 15 15"><path d="M10 3 H14 M7 6 H14 M1 9 H14 M1 11.5 H14 M1 14 H14" stroke="#222" stroke-width="1.5"/></svg>
<svg class="a" style="left:923px;top:112px;" width="17" height="17" viewBox="0 0 17 17"><rect x="5.5" y="0.5" width="10" height="12" fill="#e4edf5" stroke="#5a6a7a"/><rect x="9" y="1" width="6" height="6" fill="#7a7a7a"/><rect x="0" y="9" width="8" height="8" fill="#e08a10"/><text x="1.5" y="16" font-size="7" font-weight="bold" font-family="Liberation Sans" fill="#fff">c</text></svg>
<svg class="a" style="left:1347px;top:112px;" width="12" height="11" viewBox="0 0 12 11"><rect x="0.5" y="0.5" width="10" height="10" fill="#f8f8f8" stroke="#777"/><path d="M1 5.5 H10 M5.5 1 V10" stroke="#222" stroke-width="1.2"/><path d="M3 3 L8 8 M8 3 L3 8" stroke="#222" stroke-width="0.8"/></svg>
<div class="a" style="left:370px;top:134px;width:963px;height:386px;background:#fff"></div>
<div class="a" style="left:370px;top:134px;width:27px;height:386px;background:#ebebe7"></div>
<div class="a" style="left:397px;top:134px;width:1px;height:386px;background:#a8a8a8"></div>
<div class="a" style="left:427px;top:332px;width:906px;height:18px;background:#e9eff8"></div>
<div class="a" style="left:1067px;top:134px;width:1px;height:386px;background:#f4a0a0"></div>
<div class="a" style="left:370px;top:134px;width:963px;height:386px;overflow:hidden">
<div class="a code" style="left:0px;top:2px;width:24px;text-align:right;color:#000">1</div>
<div class="a code" style="left:0px;top:20px;width:24px;text-align:right;color:#000">2</div>
<div class="a code" style="left:0px;top:38px;width:24px;text-align:right;color:#000">3</div>
<div class="a code" style="left:57px;top:38px"><span class="pp">#include</span> <span class="st">&lt;iostream&gt;</span></div>
<div class="a code" style="left:0px;top:56px;width:24px;text-align:right;color:#000">4</div>
<div class="a code" style="left:57px;top:56px"><span class="pp">#include</span> <span class="st">&lt;opencv2/core.hpp&gt;</span></div>
<div class="a code" style="left:0px;top:74px;width:24px;text-align:right;color:#000">5</div>
<div class="a code" style="left:57px;top:74px"><span class="pp">#include</span> <span class="st">&lt;opencv2/highgui.hpp&gt;</span></div>
<div class="a code" style="left:0px;top:92px;width:24px;text-align:right;color:#000">6</div>
<div class="a code" style="left:57px;top:92px"><span class="pp">#include</span> <span class="st">&lt;opencv2/imgproc.hpp&gt;</span></div>
<div class="a code" style="left:0px;top:110px;width:24px;text-align:right;color:#000">7</div>
<div class="a code" style="left:57px;top:110px"><span class="pp">#include</span> <span class="st">&lt;opencv2/videoio.hpp&gt;</span></div>
<div class="a code" style="left:0px;top:128px;width:24px;text-align:right;color:#000">8</div>
<div class="a code" style="left:57px;top:128px"><span class="pp">#include</span> <span class="st">&lt;ctime&gt;</span></div>
<div class="a code" style="left:0px;top:146px;width:24px;text-align:right;color:#000">9</div>
<div class="a code" style="left:0px;top:164px;width:24px;text-align:right;color:#000">10</div>
<div class="a code" style="left:57px;top:164px"><span class="kw">long</span> <span class="kw">long</span> <b>getTimestamp</b>()</div>
<div class="a code" style="left:0px;top:182px;width:24px;text-align:right;color:#000">11</div>
<div class="a code" style="left:57px;top:182px">{</div>
<div class="a code" style="left:57px;top:200px">    <span class="kw">const</span> std::<span class="hl">chrono</span>::time_point&lt;std::<span class="hl">chrono</span>::<span class="sq">system_clock</span>&gt; now = std::<span class="hl">chrono</span>::<span class="sq">system_clock</span>::now();</div>
<div class="a code" style="left:57px;top:218px">    <span class="kw">const</span> std::<span class="hl">chrono</span>::<span class="sq">microseconds</span> epoch = std::<span class="hl">chrono</span>::<span class="sq">duration_cast</span>&lt;std::<span class="hl">chrono</span>::<span class="sq">microseconds</span>&gt;(now.<span class="sq">time_since_epoch</span>());</div>
<div class="a code" style="left:57px;top:236px">   <span class="kw">return</span>  epoch.<span class="sq">count</span>();</div>
<div class="a code" style="left:0px;top:254px;width:24px;text-align:right;color:#000">15</div>
<div class="a code" style="left:57px;top:254px">}</div>
<div class="a code" style="left:0px;top:272px;width:24px;text-align:right;color:#000">16</div>
<div class="a code" style="left:0px;top:290px;width:24px;text-align:right;color:#000">17</div>
<div class="a code" style="left:57px;top:290px">std::<span class="ty">string</span> folder_name = <span class="st">&quot;/home/pi/</span><span class="st sq">stereopi</span><span class="st">-</span><span class="st sq">cpp</span><span class="st">-tutorial/&quot;</span>;</div>
<div class="a code" style="left:0px;top:308px;width:24px;text-align:right;color:#000">18</div>
<div class="a code" style="left:0px;top:326px;width:24px;text-align:right;color:#000">19</div>
<div class="a code" style="left:57px;top:326px"><span class="kw">int</span> <b>main</b>()</div>
<div class="a code" style="left:0px;top:344px;width:24px;text-align:right;color:#000">20</div>
<div class="a code" style="left:57px;top:344px">{</div>
<div class="a code" style="left:0px;top:362px;width:24px;text-align:right;color:#000">21</div>
<div class="a code" style="left:57px;top:362px">    fprintf(<span class="ty">stderr</span>, <span class="st">&quot;You can press &#x27;Q&#x27; to quit this script.\n&quot;</span>);</div>
<div class="a code" style="left:0px;top:380px;width:24px;text-align:right;color:#000">22</div>
<div class="zz" style="left:433px;top:214px;width:96px"></div>
<div class="zz" style="left:697px;top:214px;width:96px"></div>
<div class="zz" style="left:241px;top:232px;width:96px"></div>
<div class="zz" style="left:513px;top:232px;width:104px"></div>
<div class="zz" style="left:729px;top:232px;width:96px"></div>
<div class="zz" style="left:873px;top:232px;width:128px"></div>
<div class="zz" style="left:193px;top:250px;width:40px"></div>
<div class="zz" style="left:345px;top:304px;width:64px"></div>
<div class="zz" style="left:417px;top:304px;width:24px"></div>
</div>
<svg class="a" style="left:405px;top:138px;" width="11" height="11" viewBox="0 0 11 11"><rect x="0.5" y="0.5" width="10" height="10" fill="#fff" stroke="#444"/><path d="M3 5.5 H8" stroke="#444"/></svg>
<svg class="a" style="left:405px;top:174px;" width="11" height="11" viewBox="0 0 11 11"><rect x="0.5" y="0.5" width="10" height="10" fill="#fff" stroke="#444"/><path d="M3 5.5 H8" stroke="#444"/></svg>
<svg class="a" style="left:405px;top:318px;" width="11" height="11" viewBox="0 0 11 11"><rect x="0.5" y="0.5" width="10" height="10" fill="#fff" stroke="#444"/><path d="M3 5.5 H8" stroke="#444"/></svg>
<svg class="a" style="left:405px;top:480px;" width="11" height="11" viewBox="0 0 11 11"><rect x="0.5" y="0.5" width="10" height="10" fill="#fff" stroke="#444"/><path d="M3 5.5 H8" stroke="#444"/></svg>
<div class="a" style="left:410px;top:185px;width:1px;height:84px;background:#444"></div>
<div class="a" style="left:410px;top:269px;width:5px;height:1px;background:#444"></div>
<div class="a" style="left:410px;top:329px;width:1px;height:66px;background:#444"></div>
<div class="a" style="left:410px;top:395px;width:5px;height:1px;background:#444"></div>
<div class="a" style="left:410px;top:491px;width:1px;height:29px;background:#444"></div>
<div class="a" style="left:427px;top:332px;width:1px;height:54px;background:repeating-linear-gradient(#9a9a9a 0 1px,transparent 1px 2px)"></div>
<div class="a" style="left:427px;top:494px;width:1px;height:26px;background:repeating-linear-gradient(#9a9a9a 0 1px,transparent 1px 2px)"></div>
<svg class="a" style="left:386px;top:335px;" width="12" height="13" viewBox="0 0 12 13"><path d="M5 0.5 C8 0.5 9.5 2.5 9.5 4.5 C9.5 6.5 7.5 7.5 7 9 H3 C2.5 7.5 0.5 6.5 0.5 4.5 C0.5 2.5 2 0.5 5 0.5Z" fill="#f2e060" stroke="#b09a20" stroke-width="0.9"/><circle cx="3.8" cy="3.5" r="1.6" fill="#fffbd0"/><rect x="3" y="9" width="4" height="2.8" fill="#8a98a8" stroke="#34465a" stroke-width="0.7"/><circle cx="8.6" cy="9" r="3.2" fill="#e01818" stroke="#9a0c0c" stroke-width="0.6"/><path d="M8.6 7.2 V9.5 M8.6 10.3 V10.9" stroke="#fff" stroke-width="1"/></svg>
<svg class="a" style="left:386px;top:353px;" width="12" height="13" viewBox="0 0 12 13"><path d="M5 0.5 C8 0.5 9.5 2.5 9.5 4.5 C9.5 6.5 7.5 7.5 7 9 H3 C2.5 7.5 0.5 6.5 0.5 4.5 C0.5 2.5 2 0.5 5 0.5Z" fill="#f2e060" stroke="#b09a20" stroke-width="0.9"/><circle cx="3.8" cy="3.5" r="1.6" fill="#fffbd0"/><rect x="3" y="9" width="4" height="2.8" fill="#8a98a8" stroke="#34465a" stroke-width="0.7"/><circle cx="8.6" cy="9" r="3.2" fill="#e01818" stroke="#9a0c0c" stroke-width="0.6"/><path d="M8.6 7.2 V9.5 M8.6 10.3 V10.9" stroke="#fff" stroke-width="1"/></svg>
<svg class="a" style="left:386px;top:371px;" width="12" height="13" viewBox="0 0 12 13"><path d="M5 0.5 C8 0.5 9.5 2.5 9.5 4.5 C9.5 6.5 7.5 7.5 7 9 H3 C2.5 7.5 0.5 6.5 0.5 4.5 C0.5 2.5 2 0.5 5 0.5Z" fill="#f2e060" stroke="#b09a20" stroke-width="0.9"/><circle cx="3.8" cy="3.5" r="1.6" fill="#fffbd0"/><rect x="3" y="9" width="4" height="2.8" fill="#8a98a8" stroke="#34465a" stroke-width="0.7"/><circle cx="8.6" cy="9" r="3.2" fill="#e01818" stroke="#9a0c0c" stroke-width="0.6"/><path d="M8.6 7.2 V9.5 M8.6 10.3 V10.9" stroke="#fff" stroke-width="1"/></svg>
<div class="a" style="left:1333px;top:134px;width:29px;height:387px;background:#f0f0f0"></div>
<div class="a" style="left:1333px;top:151px;width:15px;height:105px;background:#cdcdcd"></div>
<svg class="a" style="left:1336px;top:140px;" width="9" height="6" viewBox="0 0 9 6"><path d="M0.8 5 L4.5 1.2 L8.2 5" fill="none" stroke="#4e4e4e" stroke-width="1.9"/></svg>
<svg class="a" style="left:1336px;top:508px;" width="9" height="6" viewBox="0 0 9 6"><path d="M0.8 1 L4.5 4.8 L8.2 1" fill="none" stroke="#4e4e4e" stroke-width="1.9"/></svg>
<div class="a" style="left:1351px;top:140px;width:9px;height:10px;background:#fff"></div>
<div class="a" style="left:1352px;top:141px;width:7px;height:8px;background:#f02020"></div>
<div class="a" style="left:1350px;top:205px;width:12px;height:3px;background:#a8a070"></div>
<div class="a" style="left:1350px;top:209px;width:12px;height:3px;background:#f00"></div>
<div class="a" style="left:1350px;top:213px;width:12px;height:3px;background:#f00"></div>
<div class="a" style="left:1350px;top:217px;width:12px;height:3px;background:#f00"></div>
<div class="a" style="left:1353px;top:210px;width:6px;height:1px;background:#666"></div>
<div class="a" style="left:370px;top:520px;width:963px;height:17px;background:#f0f0f0"></div>
<div class="a" style="left:370px;top:520px;width:57px;height:17px;background:#ebebe7"></div>
<div class="a" style="left:444px;top:521px;width:789px;height:15px;background:#cdcdcd"></div>
<svg class="a" style="left:432px;top:525px;" width="6" height="9" viewBox="0 0 6 9"><path d="M5 0.8 L1.2 4.5 L5 8.2" fill="none" stroke="#4e4e4e" stroke-width="1.9"/></svg>
<svg class="a" style="left:1321px;top:525px;" width="6" height="9" viewBox="0 0 6 9"><path d="M1 0.8 L4.8 4.5 L1 8.2" fill="none" stroke="#4e4e4e" stroke-width="1.9"/></svg>
<div class="a" style="left:369px;top:537px;width:994px;height:21px;background:#f0f0f0;border:1px solid #898c95"></div>
<svg class="a" style="left:379px;top:539px;" width="16" height="16" viewBox="0 0 16 16"><path d="M2.5 0.5 h8.5 l3.5 3.5 v11 h-12z" fill="#eef3f8" stroke="#5e6a76"/><path d="M11 0.5 v3.5 h3.5" fill="#dde4ea" stroke="#5e6a76"/><path d="M6 10.5 h6 M6 12.5 h6" stroke="#8f9aa6" stroke-width="0.8"/><rect x="0" y="2.5" width="9" height="7" fill="#d8850c"/><path d="M4 4.2 Q3 3.4 2.1 4 Q1.4 4.8 1.6 6.2 Q2 7.8 4 7.2 M8.2 4.2 Q7.2 3.4 6.3 4 Q5.6 4.8 5.8 6.2 Q6.2 7.8 8.2 7.2" fill="none" stroke="#fff" stroke-width="1.1"/></svg>
<svg class="a" style="left:405px;top:540px;" width="11" height="16" viewBox="0 0 11 16"><path d="M0.8 2.3 L2.6 0.6 L9.8 7.8 L2.6 15 L0.8 13.3 L6.3 7.8Z" fill="#fafafa" stroke="#46566a" stroke-width="1"/></svg>
<svg class="a" style="left:429px;top:540px;" width="13" height="13" viewBox="0 0 13 13"><circle cx="6.5" cy="6.5" r="6" fill="#e86a6a" stroke="#b03a3a"/><circle cx="6.5" cy="5" r="4" fill="#f4a8a8" opacity="0.6"/><path d="M5 9.5 V3.5 H8.5 M5 6.3 H8" fill="none" stroke="#fff" stroke-width="1.3"/></svg>
<div class="a ui" style="left:447px;top:541px;letter-spacing:-0.2px">getTimestamp</div>
<svg class="a" style="left:520px;top:540px;" width="11" height="16" viewBox="0 0 11 16"><path d="M0.8 2.3 L2.6 0.6 L9.8 7.8 L2.6 15 L0.8 13.3 L6.3 7.8Z" fill="#fafafa" stroke="#46566a" stroke-width="1"/></svg>
<svg class="a" style="left:1348px;top:542px;" width="10" height="10" viewBox="0 0 10 10"><path d="M0.5 0.5 L9.5 9.5 M9.5 0.5 L0.5 9.5" stroke="#333" stroke-width="1.1"/></svg>
<div class="a" style="left:369px;top:562px;width:994px;height:142px;background:#f0f0f0;border:1px solid #898c95"></div>
<div class="a" style="left:370px;top:563px;width:992px;height:19px;background:linear-gradient(#f0f0f0,#e3e3e3);box-shadow:inset 1px 1px 0 #fff"></div>
<div class="a" style="left:370px;top:582px;width:992px;height:1px;background:#898c95"></div>
<div class="a" style="left:507px;top:563px;width:62px;height:19px;background:#fff"></div>
<div class="a" style="left:506px;top:563px;width:1px;height:19px;background:#898c95"></div>
<div class="a" style="left:569px;top:563px;width:1px;height:19px;background:#898c95"></div>
<div class="a ui b" style="left:377px;top:566px;">Terminal - localhost</div>
<div class="a ui b" style="left:511px;top:566px;">Output</div>
<svg class="a" style="left:555px;top:568px;" width="9" height="9" viewBox="0 0 9 9"><path d="M0.5 0.5 L8.5 8.5 M8.5 0.5 L0.5 8.5" stroke="#3a3a3a" stroke-width="1.1"/></svg>
<div class="a" style="left:1346px;top:572px;width:10px;height:2px;background:#444"></div>
<div class="a" style="left:370px;top:583px;width:992px;height:24px;background:#f0f0f0"></div>
<div class="a" style="left:393px;top:585px;width:936px;height:22px;background:linear-gradient(#f6f6f6,#ececec)"></div>
<div class="a" style="left:483px;top:586px;width:1px;height:20px;background:#d0d0d0"></div>
<div class="a" style="left:767px;top:586px;width:1px;height:20px;background:#d0d0d0"></div>
<div class="a" style="left:1065px;top:586px;width:1px;height:20px;background:#d0d0d0"></div>
<div class="a" style="left:1065px;top:584px;width:265px;height:23px;background:#fff;border:1px solid #d0d0d0;border-bottom:none"></div>
<div class="a ui" style="left:394px;top:591px;letter-spacing:-0.1px">168.2.172:22</div>
<svg class="a" style="left:466px;top:592px;" width="9" height="9" viewBox="0 0 9 9"><path d="M0.5 0.5 L8.5 8.5 M8.5 0.5 L0.5 8.5" stroke="#3a3a3a" stroke-width="1.1"/></svg>
<div class="a ui" style="left:488px;top:591px;letter-spacing:-0.1px">CppApplication_1 (Build, Run) - pi@192.168.2.172:22</div>
<svg class="a" style="left:752px;top:592px;" width="9" height="9" viewBox="0 0 9 9"><path d="M0.5 0.5 L8.5 8.5 M8.5 0.5 L0.5 8.5" stroke="#3a3a3a" stroke-width="1.1"/></svg>
<div class="a ui" style="left:776px;top:591px;letter-spacing:-0.1px">CppApplication_2 (Clean, Build) - pi@192.168.2.172:22</div>
<svg class="a" style="left:1049px;top:592px;" width="9" height="9" viewBox="0 0 9 9"><path d="M0.5 0.5 L8.5 8.5 M8.5 0.5 L0.5 8.5" stroke="#3a3a3a" stroke-width="1.1"/></svg>
<div class="a ui" style="left:1073px;top:589px;letter-spacing:-0.1px">CppApplication_2 (Build) - pi@192.168.2.172:22</div>
<svg class="a" style="left:1313px;top:591px;" width="9" height="9" viewBox="0 0 9 9"><path d="M0.5 0.5 L8.5 8.5 M8.5 0.5 L0.5 8.5" stroke="#3a3a3a" stroke-width="1.1"/></svg>
<svg class="a" style="left:1327px;top:584px;" width="35" height="24" viewBox="0 0 35 24"><path d="M1.5 0.5 L2.5 2 L1 4 L2 7 L0.8 10 L1.8 13 L0.8 16 L1.8 19 L1 22 L2 23.5" fill="none" stroke="#9a9a9a" stroke-dasharray="1.5 1"/><rect x="3" y="8" width="31" height="14" fill="#ececec"/><path d="M3 22.5 H34 M18.5 7.5 V23 M34 7.5 V23" stroke="#6e6e6e" stroke-width="1.3"/><path d="M12.5 11.5 V18.5 L8.5 15Z" fill="#666"/><path d="M24.5 11.5 V18.5 L28.5 15Z" fill="#999"/></svg>
<svg class="a" style="left:374px;top:587px;" width="15" height="15" viewBox="0 0 15 15"><rect x="0.5" y="0.5" width="14" height="14" fill="#d8b8b8" stroke="#b09898"/><rect x="5" y="5" width="5" height="5" fill="#e8d8d8"/></svg>
<svg class="a" style="left:373px;top:609px;" width="16" height="16" viewBox="0 0 16 16"><path d="M1 1 L8 8 L1 15Z M8 1 L15 8 L8 15Z" fill="#c8f0b0" stroke="#30a010" stroke-width="1.5"/></svg>
<svg class="a" style="left:373px;top:632px;" width="16" height="17" viewBox="0 0 16 17"><rect x="0.5" y="0.5" width="15" height="15" rx="2" fill="#2a2a2a" stroke="#888"/><rect x="2" y="3" width="12" height="10" fill="#1a3020"/><path d="M3.5 5 L6 7 L3.5 9 M7 10.5 H12" fill="none" stroke="#e0e0e0" stroke-width="1"/></svg>
<div class="a" style="left:393px;top:607px;width:950px;height:77px;background:#fff"></div>
<div class="a" style="left:393px;top:607px;width:950px;height:77px;overflow:hidden">
<div class="a out" style="left:20px;top:-1px">Uploading changed files:</div>
<div class="a out" style="left:20px;top:15px">        Zipping 1 changed files...</div>
<div class="a out" style="left:20px;top:31px">        Uploading zip to pi@192.168.2.172...</div>
<div class="a out" style="left:20px;top:47px">        Unzipping changed files...</div>
<div class="a out" style="left:20px;top:63px">Checking exec permissions...</div>
</div>
<div class="a" style="left:1343px;top:607px;width:19px;height:77px;background:#f0f0f0"></div>
<div class="a" style="left:1343px;top:633px;width:15px;height:11px;background:#cdcdcd"></div>
<svg class="a" style="left:1346px;top:618px;" width="9" height="6" viewBox="0 0 9 6"><path d="M0.8 5 L4.5 1.2 L8.2 5" fill="none" stroke="#4e4e4e" stroke-width="1.9"/></svg>
<svg class="a" style="left:1346px;top:672px;" width="9" height="6" viewBox="0 0 9 6"><path d="M0.8 1 L4.5 4.8 L8.2 1" fill="none" stroke="#4e4e4e" stroke-width="1.9"/></svg>
<div class="a" style="left:393px;top:607px;width:1px;height:95px;background:#d8d8d8"></div>
<div class="a" style="left:394px;top:683px;width:968px;height:18px;background:#fff"></div>
<div class="a" style="left:394px;top:684px;width:966px;height:16px;background:#f0f0f0"></div>
<div class="a" style="left:1359px;top:607px;width:1px;height:95px;background:#d8d8d8"></div>
<div class="a" style="left:393px;top:701px;width:967px;height:1px;background:#d8d8d8"></div>
<div class="a" style="left:427px;top:684px;width:747px;height:15px;background:#cdcdcd"></div>
<svg class="a" style="left:414px;top:688px;" width="6" height="9" viewBox="0 0 6 9"><path d="M5 0.8 L1.2 4.5 L5 8.2" fill="none" stroke="#4e4e4e" stroke-width="1.9"/></svg>
<svg class="a" style="left:1332px;top:688px;" width="6" height="9" viewBox="0 0 6 9"><path d="M1 0.8 L4.8 4.5 L1 8.2" fill="none" stroke="#4e4e4e" stroke-width="1.9"/></svg>
<div class="a" style="left:1343px;top:607px;width:16px;height:76px;background:#f0f0f0"></div>
<div class="a" style="left:1343px;top:633px;width:15px;height:11px;background:#cdcdcd"></div>
<svg class="a" style="left:1346px;top:618px;" width="9" height="6" viewBox="0 0 9 6"><path d="M0.8 5 L4.5 1.2 L8.2 5" fill="none" stroke="#4e4e4e" stroke-width="1.9"/></svg>
<svg class="a" style="left:1346px;top:672px;" width="9" height="6" viewBox="0 0 9 6"><path d="M0.8 1 L4.5 4.8 L8.2 1" fill="none" stroke="#4e4e4e" stroke-width="1.9"/></svg>
<svg class="a" style="left:1209px;top:709px;" width="17" height="16" viewBox="0 0 17 16"><path d="M8 0.5 C12.5 0.5 15.5 3 15.5 6.5 C15.5 10 12.5 12.5 9 12.5 L8 15.5 L6 12.3 C3 11.8 0.5 9.5 0.5 6.5 C0.5 3 3.5 0.5 8 0.5Z" fill="#dde8f4" stroke="#4a5a70"/><text x="5.5" y="10" font-size="9" font-weight="bold" font-family="Liberation Sans">1</text></svg>
<div class="a" style="left:1229px;top:710px;width:1px;height:14px;background:#a0a0a0"></div>
<div class="a" style="left:1339px;top:710px;width:1px;height:14px;background:#a0a0a0"></div>
<div class="a ui" style="left:1275px;top:710px;font-size:11.5px;letter-spacing:0px;line-height:14px">12:3</div>
<div class="a ui" style="left:1343px;top:711px;font-size:11.5px;letter-spacing:-0.2px;line-height:14px">INS</div>
<div class="a" style="left:0px;top:728px;width:1366px;height:40px;background:#0c1017"></div>
<div class="a" style="left:48px;top:728px;width:344px;height:40px;background:#f0f0f0;border-top:1px solid #b8b8b8"></div>
<svg class="a" style="left:16px;top:740px;" width="16" height="16" viewBox="0 0 16 16"><path d="M0 2.2 L6.5 1.3 V7.5 H0Z M7.5 1.1 L16 0 V7.5 H7.5Z M0 8.5 H6.5 V14.7 L0 13.8Z M7.5 8.5 H16 V16 L7.5 14.9Z" fill="#fff"/></svg>
<svg class="a" style="left:57px;top:737px;" width="22" height="22" viewBox="0 0 22 22"><circle cx="11" cy="11" r="9" fill="none" stroke="#111" stroke-width="2.6"/></svg>
<div class="a ui" style="left:88px;top:740px;font-size:15px;letter-spacing:-0.25px;color:#2b2b2b;line-height:17px">Type here to search</div>
<svg class="a" style="left:366px;top:739px;" width="12" height="18" viewBox="0 0 12 18"><rect x="3" y="0.8" width="6" height="11" rx="3" fill="none" stroke="#222" stroke-width="1.5"/><path d="M1 8 C1 14 11 14 11 8 M6 13 V17 M3 17 H9" fill="none" stroke="#222" stroke-width="1.5"/></svg>
<svg class="a" style="left:408px;top:740px;" width="17" height="16" viewBox="0 0 17 16"><path d="M0.5 2.5 V0.5 H10.5 V2.5 M0.5 13 V15 H10.5 V13 M15 0 V15.5" fill="none" stroke="#fff" stroke-width="1.1"/><rect x="1.5" y="4.5" width="8" height="6.5" fill="none" stroke="#fff" stroke-width="1.2"/><rect x="13.3" y="4.8" width="3.4" height="3.4" fill="#fff"/></svg>
<svg class="a" style="left:456px;top:738px;" width="23" height="20" viewBox="0 0 23 20"><path d="M0.5 1.5 H7.5 L9 3 H22.5 V19.5 H0.5Z" fill="#ffe08a"/><path d="M0.5 1.5 H7.5 L9 3 V4.5 H0.5Z" fill="#f4c040"/><rect x="2" y="2" width="4" height="1.2" fill="#7ac8e8"/><path d="M4.5 10.5 H18.5 V19.5 H14.5 V15 H8.5 V19.5 H4.5Z" fill="#38b0ee"/></svg>
<svg class="a" style="left:504px;top:736px;" width="24" height="24" viewBox="0 0 24 24"><path d="M16.5 0.5 L23.5 3.2 V20.8 L16.5 23.5 L0.5 18.2 L16.5 20.2 Z" fill="#8661c5"/><path d="M0.5 7.5 L3.5 6 L16.5 15.5 V19.5 L3.5 12.5 L0.5 13.5Z" fill="#8661c5"/><path d="M16.5 4 V8.5 L3.5 13 L2 10Z" fill="#8661c5"/><path d="M2 8.5 L5 10 L2 11.5Z" fill="#0c1017"/></svg>
<svg class="a" style="left:556px;top:736px;" width="19" height="23" viewBox="0 0 19 23"><rect x="0" y="0" width="19" height="23" fill="#fff"/><rect x="2" y="2" width="15" height="5" fill="#0c1017"/><rect x="3" y="9" width="2" height="2" fill="#0c1017"/><rect x="7" y="9" width="2" height="2" fill="#0c1017"/><rect x="11" y="9" width="2" height="2" fill="#0c1017"/><rect x="15" y="9" width="2" height="2" fill="#0c1017"/><rect x="3" y="13" width="2" height="2" fill="#0c1017"/><rect x="7" y="13" width="2" height="2" fill="#0c1017"/><rect x="11" y="13" width="2" height="2" fill="#0c1017"/><rect x="15" y="13" width="2" height="2" fill="#0c1017"/><rect x="3" y="17" width="2" height="2" fill="#0c1017"/><rect x="7" y="17" width="2" height="2" fill="#0c1017"/><rect x="11" y="17" width="2" height="2" fill="#0c1017"/><rect x="15" y="17" width="2" height="2" fill="#0c1017"/></svg>
<svg class="a" style="left:602px;top:737px;" width="24" height="22" viewBox="0 0 24 22"><path d="M6 0 L23 6 V16 L6 11Z" fill="#4fb8f0"/><path d="M1 18 L10 14 L20 17 L11 21Z" fill="#c8c8c8"/><path d="M14 16 H20" stroke="#fff"/></svg>
<svg class="a" style="left:652px;top:736px;" width="23" height="23" viewBox="0 0 23 23"><circle cx="11.5" cy="11.5" r="11" fill="#db4437"/><path d="M11.5 11.5 L21.03 6 A11 11 0 0 1 11.5 22.5 Z" fill="#f4c20d"/><path d="M11.5 11.5 L11.5 22.5 A11 11 0 0 1 1.97 6 Z" fill="#0f9d58"/><circle cx="11.5" cy="11.5" r="5.2" fill="#fff"/><circle cx="11.5" cy="11.5" r="4.1" fill="#4285f4"/></svg>
<svg class="a" style="left:700px;top:736px;" width="24" height="24" viewBox="0 0 24 24"><rect x="10" y="1" width="11" height="9" fill="#e8e8e8"/><rect x="11.5" y="2.5" width="8" height="6" fill="#2040d0"/><rect x="1" y="13" width="11" height="9" fill="#e8e8e8"/><rect x="2.5" y="14.5" width="8" height="6" fill="#2040d0"/><path d="M14 8 L8 14 L12 13 L9 19 L16 11 L12 12Z" fill="#f8e020" stroke="#806000" stroke-width="0.5"/><rect x="12" y="10" width="11" height="3" fill="#d0d0d0"/><rect x="0" y="21" width="12" height="3" fill="#d0d0d0"/></svg>
<div class="a" style="left:737px;top:728px;width:49px;height:40px;background:#34383e"></div>
<svg class="a" style="left:749px;top:736px;" width="24" height="24" viewBox="0 0 24 24"><path d="M12 1 L22.5 6 V18 L12 23 L1.5 18 V6 Z" fill="#2a3060" stroke="#1a2050" stroke-width="1.2"/><path d="M3 6.5 L12 2.5 L21 6.5 L12 10.5Z" fill="#c8dcdc"/><path d="M3 6.5 L12 10.5 V21.5 L3 17.5Z" fill="#9ec0e8"/><path d="M21 6.5 L12 10.5 V21.5 L21 17.5Z" fill="#b8cce0"/></svg>
<svg class="a" style="left:798px;top:736px;" width="24" height="24" viewBox="0 0 24 24"><rect x="1" y="2" width="17" height="21" fill="#f0f0e0" stroke="#808080"/><rect x="1" y="14" width="17" height="9" fill="#70c040"/><path d="M4 6 V14 M6 6 V14 M8 10 H12 M10 8 V12" stroke="#333"/><path d="M22 1 L13 16 L12 19 L15 17 L23.5 3Z" fill="#f0a030" stroke="#804000" stroke-width="0.6"/></svg>
<svg class="a" style="left:847px;top:736px;" width="23" height="23" viewBox="0 0 23 23"><path d="M6 1 L22 3 L17 22 L1 19Z" fill="#a8d8ec" stroke="#6aa0c0"/><path d="M6 1 L22 3 L21 6 L5 4Z" fill="#e8e8e8"/><path d="M19 4 L22 3 L17 22 L15 21Z" fill="#e8c060"/></svg>
<svg class="a" style="left:896px;top:736px;" width="25" height="25" viewBox="0 0 25 25"><path d="M3 2 L10 2 L3 9Z" fill="#3080e0"/><path d="M9 8 V5 A4.5 4.5 0 0 1 18 5 V8" fill="none" stroke="#888" stroke-width="2"/><rect x="7" y="8" width="13" height="11" rx="1" fill="#777"/><path d="M24 16 L24 24 L16 24Z" fill="#30c040"/></svg>
<div class="a" style="left:447px;top:766px;width:33px;height:2px;background:#76b9ed"></div>
<div class="a" style="left:643px;top:766px;width:40px;height:2px;background:#76b9ed"></div>
<div class="a" style="left:692px;top:766px;width:40px;height:2px;background:#76b9ed"></div>
<div class="a" style="left:737px;top:766px;width:49px;height:2px;background:#76b9ed"></div>
<div class="a" style="left:790px;top:766px;width:40px;height:2px;background:#76b9ed"></div>
<div class="a" style="left:839px;top:766px;width:40px;height:2px;background:#76b9ed"></div>
<div class="a" style="left:888px;top:766px;width:40px;height:2px;background:#76b9ed"></div>
<div class="a" style="left:480px;top:766px;width:8px;height:2px;background:#4d7ea8"></div>
<svg class="a" style="left:1103px;top:740px;" width="16" height="15" viewBox="0 0 16 15"><circle cx="11" cy="4" r="3" fill="none" stroke="#fff" stroke-width="1.2"/><circle cx="5" cy="8" r="3" fill="none" stroke="#fff" stroke-width="1.2"/><path d="M0.5 15 C0.5 11 9.5 11 9.5 15 M8 10.5 C10 8 16 8 15.5 12" fill="none" stroke="#fff" stroke-width="1.2"/></svg>
<svg class="a" style="left:1141px;top:745px;" width="12" height="7" viewBox="0 0 12 7"><path d="M0.5 6.5 L6 1 L11.5 6.5" fill="none" stroke="#fff" stroke-width="1.3"/></svg>
<svg class="a" style="left:1163px;top:742px;" width="16" height="14" viewBox="0 0 16 14"><rect x="3.5" y="0.5" width="12" height="9" fill="none" stroke="#fff"/><path d="M9.5 10 V13 M6 13.5 H13 M0.5 2 V12 M0.5 4 H3" stroke="#fff"/><rect x="0" y="0" width="4" height="4" fill="none" stroke="#fff" stroke-width="0.8"/></svg>
<svg class="a" style="left:1187px;top:742px;" width="15" height="13" viewBox="0 0 15 13"><path d="M0.5 4.5 H3.5 L7.5 0.5 V12.5 L3.5 8.5 H0.5Z" fill="none" stroke="#fff"/><path d="M10 4 L14 9 M14 4 L10 9" stroke="#fff"/></svg>
<div class="a ui" style="left:1213px;top:742px;font-size:12px;letter-spacing:-0.6px;color:#fff;line-height:14px">ENG</div>
<div class="a ui" style="left:1265px;top:732px;font-size:11.5px;letter-spacing:-0.1px;color:#fff;line-height:14px">15:44</div>
<div class="a ui" style="left:1249px;top:749px;font-size:11.5px;letter-spacing:-0.1px;color:#fff;line-height:14px">04-03-2020</div>
<div class="a" style="left:1361px;top:728px;width:1px;height:40px;background:#4a4e55"></div>
<svg class="a" style="left:1325px;top:740px;" width="25" height="21" viewBox="0 0 25 21"><path d="M0.5 0.5 H17.5 V13.5 H7 L3 17 V13.5 H0.5Z" fill="#fff"/><path d="M3 4 H15 M3 7 H15 M3 10 H12" stroke="#0c1017" stroke-width="1"/><circle cx="17" cy="14" r="6.5" fill="#2a2a2a" stroke="#666"/><text x="13.8" y="18" font-size="10" font-family="Liberation Sans" fill="#fff">3</text></svg>
</body></html>
